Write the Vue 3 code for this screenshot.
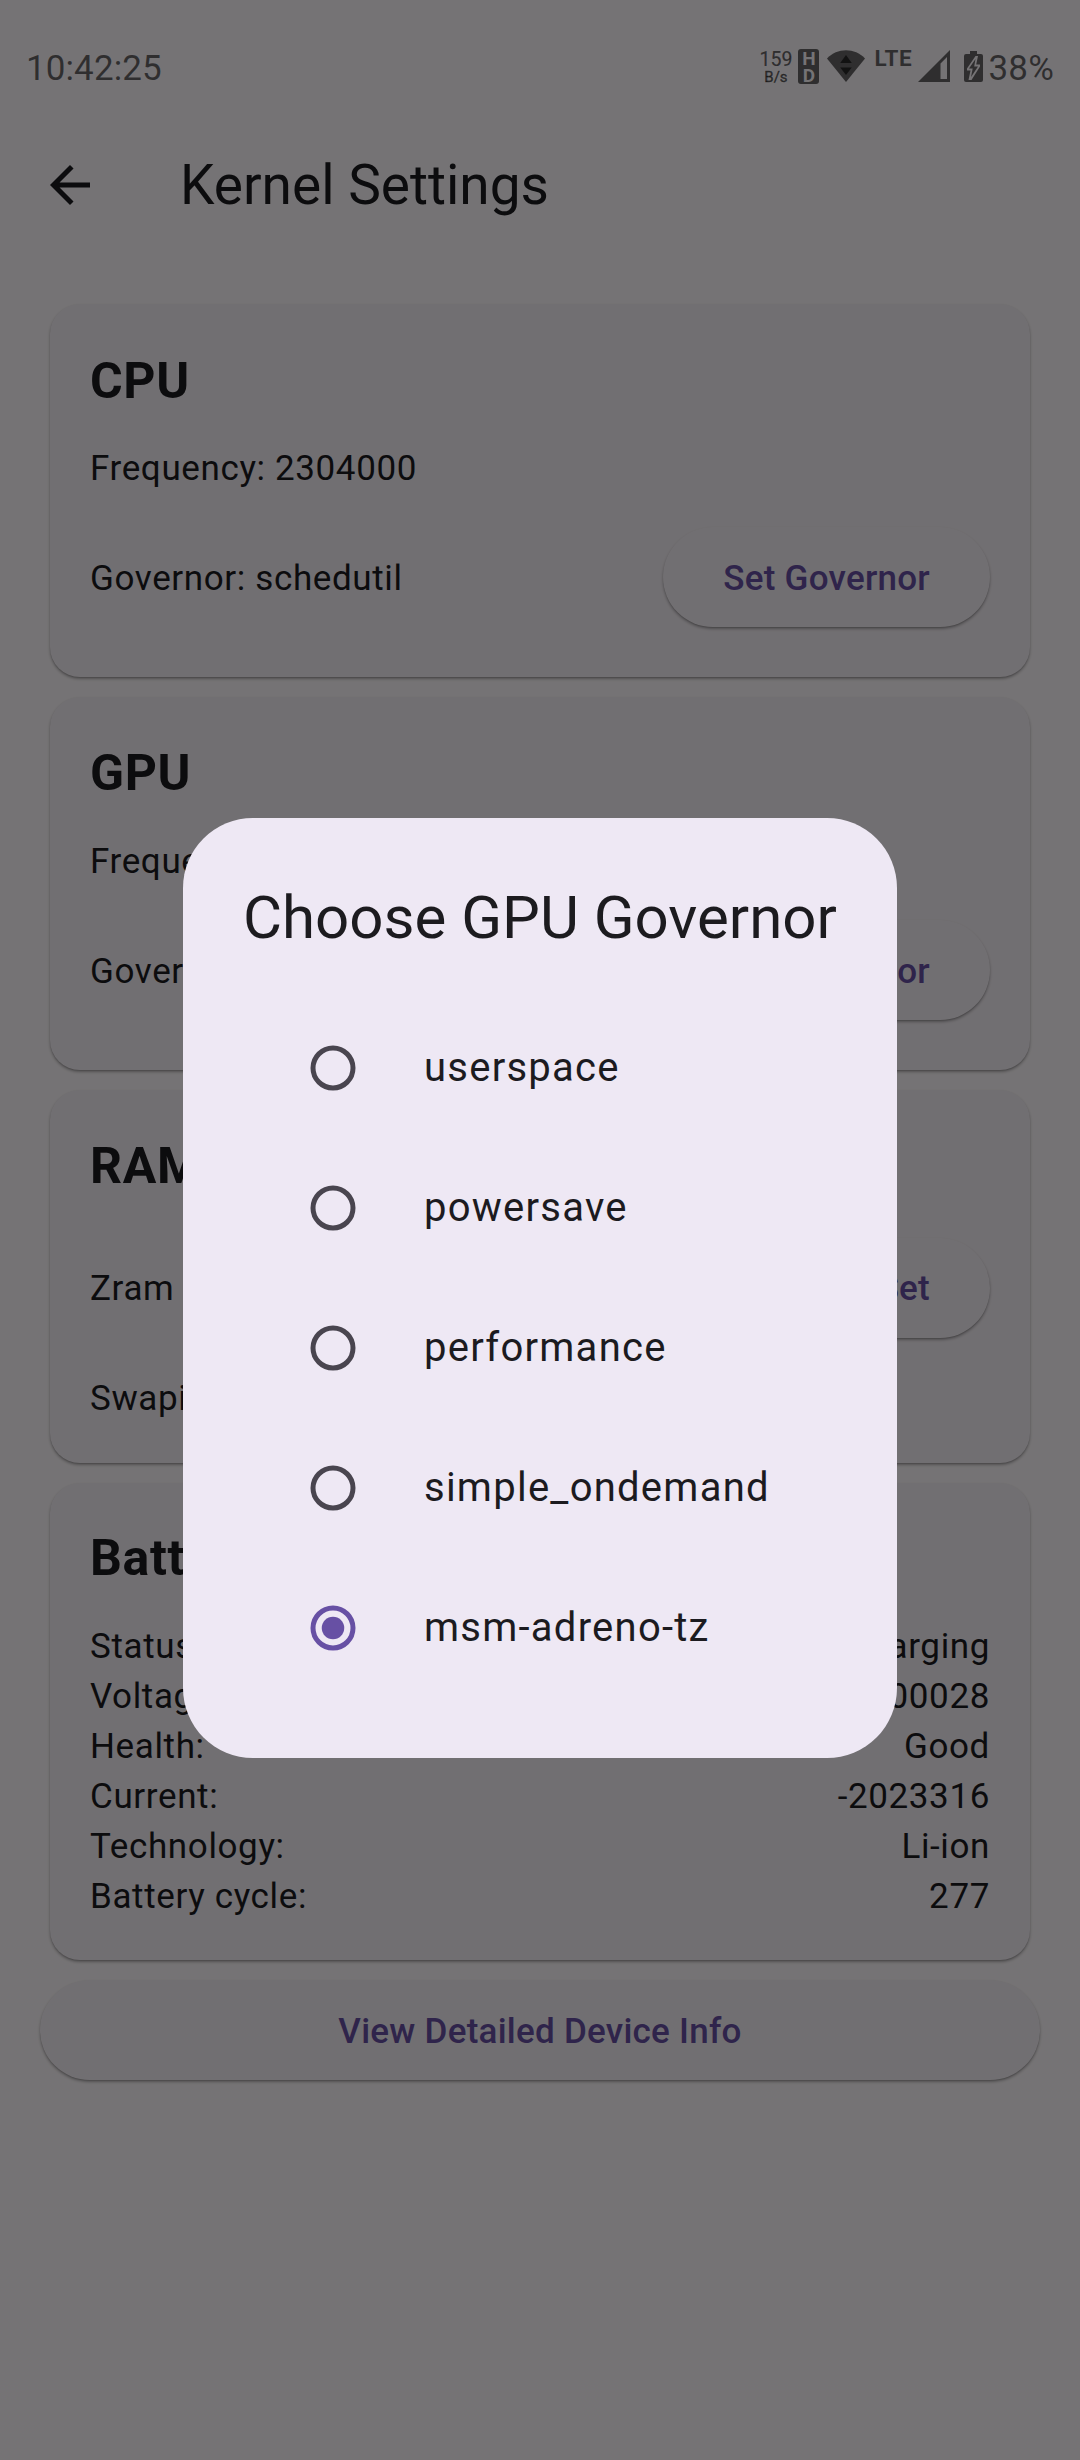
<script setup>
import { ref } from 'vue'

const selected = ref('msm-adreno-tz')
const governors = ['userspace', 'powersave', 'performance', 'simple_ondemand', 'msm-adreno-tz']
const battery = [
  ['Status:', 'Charging'],
  ['Voltage:', '4100028'],
  ['Health:', 'Good'],
  ['Current:', '-2023316'],
  ['Technology:', 'Li-ion'],
  ['Battery cycle:', '277'],
]
</script>

<template>
  <div class="screen">
    <div class="page">
      <header class="appbar">
        <svg class="back" viewBox="0 0 24 24"><path d="M20 11H7.83l5.59-5.59L12 4l-8 8 8 8 1.41-1.41L7.83 13H20v-2z" /></svg>
        <h1>Kernel Settings</h1>
      </header>
      <main class="content">
        <section class="card cpu">
          <h2>CPU</h2>
          <div class="line">Frequency: 2304000</div>
          <div class="action gap"><span>Governor: schedutil</span><button class="btn">Set Governor</button></div>
        </section>
        <section class="card gpu">
          <h2>GPU</h2>
          <div class="line">Frequency: 257000000</div>
          <div class="action gap"><span>Governor: msm-adreno-tz</span><button class="btn">Set Governor</button></div>
        </section>
        <section class="card">
          <h2>RAM</h2>
          <div class="action"><span>Zram size: 4096</span><button class="btn">Set</button></div>
          <div class="line gap">Swapiness: 100</div>
        </section>
        <section class="card battery">
          <h2>Battery</h2>
          <div v-for="[k, v] in battery" :key="k" class="line pair"><span>{{ k }}</span><span>{{ v }}</span></div>
        </section>
        <button class="btn wide">View Detailed Device Info</button>
      </main>
    </div>

    <div class="scrim">
      <div class="dialog">
        <h3>Choose GPU Governor</h3>
        <div class="options">
          <div v-for="g in governors" :key="g" class="option" @click="selected = g">
            <svg class="radio" :class="{ on: g === selected }" viewBox="0 0 50 50">
              <circle cx="25" cy="25" r="20" fill="none" stroke="currentColor" stroke-width="5" />
              <circle v-if="g === selected" cx="25" cy="25" r="11.25" fill="currentColor" />
            </svg>
            <span>{{ g }}</span>
          </div>
        </div>
      </div>
    </div>

    <div class="statusbar">
      <span class="clock">10:42:25</span>
      <div class="icons">
        <div class="speed"><span>159</span><small>B/s</small></div>
        <div class="hd"><b>H</b><b>D</b></div>
        <svg class="wifi" width="38" height="32" viewBox="0 0 38 32">
          <path d="M0 8.5C5 3 12 .2 19 .2S33 3 38 8.500L19 32z" />
          <path d="M13.200 13L19 5l5.800 8zM13.200 17.500h11.600L19 25z" />
        </svg>
        <span class="lte">LTE</span>
        <svg class="signal" width="32" height="32" viewBox="0 0 32 32">
          <path fill-rule="evenodd" d="M32 0v32H0zM22.500 13.500v15.500h6.500V7z" />
        </svg>
        <svg class="batt" width="19" height="31" viewBox="0 0 19 31">
          <path fill-rule="evenodd" d="M6 0h7v3H17q2 0 2 2v24q0 2-2 2H2q-2 0-2-2V5q0-2 2-2h4zM11.500 5L3 17.500v2h3.500L4.500 29h3L16 15.500v-2h-3.800L14 5z" />
          <path d="M11.500 8L5 17.600h3.700L7 26l7-10.600h-3.800z" />
        </svg>
        <span class="pct">38%</span>
      </div>
    </div>
  </div>
</template>

<style>
body { margin: 0; }
</style>

<style scoped>
.screen {
  position: relative;
  width: 1080px;
  height: 2460px;
  overflow: hidden;
  background: #fffbfe;
  color: #1c1b1f;
  font-family: Roboto, "Liberation Sans", sans-serif;
}
.page { padding-top: 115px; }
h1, h2, h3 { margin: 0; }
.appbar {
  height: 140px;
  display: flex;
  align-items: center;
  padding-left: 40px;
}
.back { width: 60px; height: 60px; fill: currentColor; }
h1 { margin-left: 80px; font-size: 55px; font-weight: 400; line-height: 70px; }
.content {
  padding: 49px 40px 0;
  display: flex;
  flex-direction: column;
  gap: 20px;
}
.card {
  box-sizing: border-box;
  margin: 0 10px;
  height: 373px;
  padding: 40px;
  border-radius: 30px;
  background: #f7f2f8;
  box-shadow: 0 2px 3px rgba(0, 0, 0, .3), 0 1px 1px rgba(0, 0, 0, .1);
  font-size: 35px;
  line-height: 52px;
  letter-spacing: .625px;
}
.line { height: 50px; }
.cpu, .gpu { line-height: 54px; }
.battery { height: 477px; }
h2 { height: 98px; font-size: 50px; line-height: 73px; font-weight: 700; }
.cpu h2 { line-height: 74px; }
.battery h2 { line-height: 71px; }
.gap { margin-top: 25px; }
.action, .pair { display: flex; justify-content: space-between; align-items: center; }
.pair { align-items: flex-start; }
.action { height: 120px; }
.action span { padding-top: 2px; }
.btn {
  height: 100px;
  padding: 2px 60px 0;
  border: 0;
  border-radius: 50px;
  background: #f7f2f8;
  box-shadow: 0 2px 3px rgba(0, 0, 0, .3), 0 1px 1px rgba(0, 0, 0, .1);
  color: #6750a4;
  font: 500 35px/50px Roboto, "Liberation Sans", sans-serif;
  letter-spacing: .25px;
}
.cpu .action span, .gpu .action span, .cpu .btn, .gpu .btn, .wide { padding-top: 4px; }
.scrim {
  position: absolute;
  inset: 0;
  box-sizing: border-box;
  padding-top: 115px;
  display: flex;
  align-items: center;
  justify-content: center;
  background: rgba(0, 0, 0, .541);
}
.dialog {
  box-sizing: border-box;
  width: 714px;
  height: 940px;
  padding: 60px;
  border-radius: 70px;
  background: #eee8f4;
}
h3 { font-size: 60px; line-height: 80px; font-weight: 400; white-space: nowrap; }
.options { padding: 40px 0 0 40px; }
.option {
  height: 140px;
  display: flex;
  align-items: center;
  font-size: 40px;
  letter-spacing: 1.25px;
}
.radio { width: 50px; height: 50px; margin: 0 66px 0 25px; color: #49454f; }
.radio.on { color: #6750a4; }
.statusbar {
  position: absolute;
  inset: 0 0 auto;
  height: 114px;
  color: rgba(0, 0, 0, .6);
  font-size: 35px;
  line-height: 41px;
}
.statusbar, .icons { display: flex; align-items: flex-start; }
.statusbar { justify-content: space-between; padding: 0 26px; }
.clock, .pct { margin-top: 48px; }
.clock { letter-spacing: .1px; }
.pct { letter-spacing: .2px; }
.icons svg { fill: currentColor; flex: none; }
.speed {
  margin-top: 50px;
  width: 33px;
  display: flex;
  flex-direction: column;
  align-items: center;
  font-size: 19.5px;
  line-height: 20px;
  -webkit-text-stroke: .2px;
}
.speed small { font-size: 15px; line-height: 15px; -webkit-text-stroke: .4px; }
.hd {
  margin: 49px 8px 0 6px;
  width: 21px;
  height: 35px;
  border-radius: 3px;
  background: #2f2e2f;
  display: flex;
  flex-direction: column;
  align-items: center;
  justify-content: center;
}
.hd b { color: #757375; font-size: 19px; line-height: 17px; }
.wifi { margin-top: 50px; }
.lte { margin: 48px 2px 0 9px; width: 42px; font-size: 22.5px; line-height: 21px; font-weight: 700; letter-spacing: .5px; }
.signal { margin-top: 50px; }
.batt { margin: 51px 5px 0 14px; }
</style>
